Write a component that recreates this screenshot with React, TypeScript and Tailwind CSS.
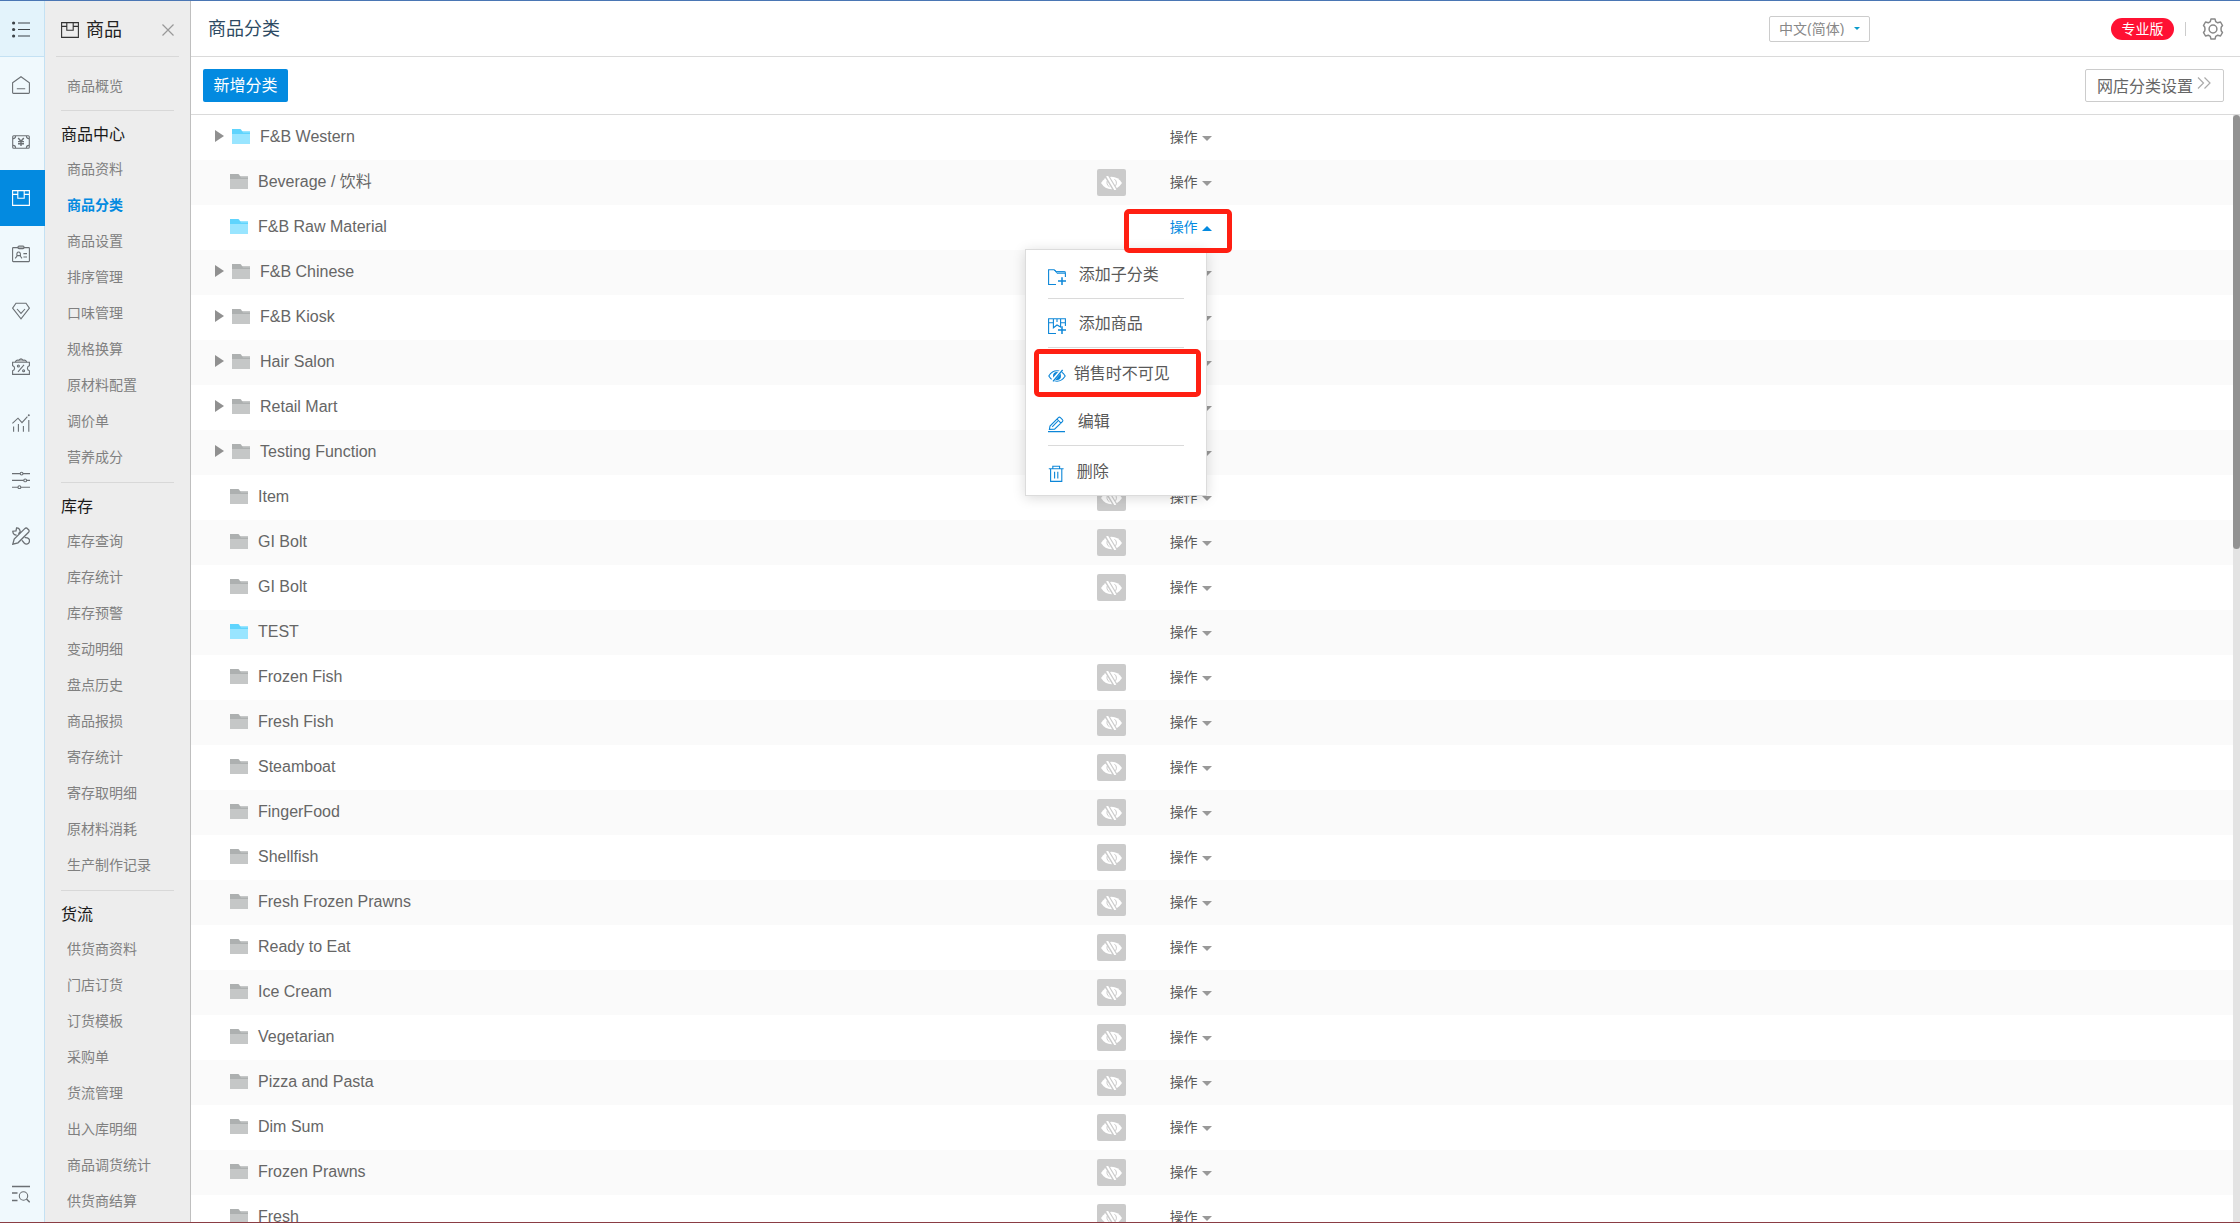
import React from 'react';

const railIcons: { name: string; art: React.ReactNode }[] = [
  {
    name: '菜单',
    art: (
      <>
        <path d="M6 3h12M6 9.5h12M6 16h12" stroke="#3d4348" strokeWidth="1.2" />
        <g fill="#3d4348" stroke="none">
          <circle cx="1.6" cy="3" r="1.6" />
          <circle cx="1.6" cy="9.5" r="1.6" />
          <circle cx="1.6" cy="16" r="1.6" />
        </g>
      </>
    ),
  },
  { name: '首页', art: <path d="M.6 6.8 9 .7l8.4 6.1v9.8q0 .8-.8.8H1.4q-.8 0-.8-.8zM4.8 12.8h8.4" /> },
  {
    name: '收银',
    art: (
      <>
        <rect x=".7" y="2.7" width="16.6" height="12.6" rx="1" />
        <path d="M1 5.6q2.6 0 2.6-2.6M17 5.6q-2.6 0-2.6-2.6M1 12.4q2.6 0 2.6 2.6M17 12.4q-2.6 0-2.6 2.6" />
        <path d="M6.2 5 9 8.3 11.8 5M9 8.3V13M6 8.6h6M6 10.8h6" strokeWidth="1.4" />
      </>
    ),
  },
  {
    name: '商品',
    art: (
      <path d="M.6 1.6h16.8v14.8H.6zM.6 5.4h5.2M12.2 5.4h5.2M5.8 1.6v7.6h6.4V1.6" />
    ),
  },
  {
    name: '员工',
    art: (
      <>
        <rect x=".6" y="2.6" width="16.8" height="14" rx=".6" />
        <rect x="6" y="1" width="6" height="2.6" rx="1" fill="#b5babd" />
        <path d="M3.2 13.4 5 11.2M5 11.2q-.6-4.2 1.6-4.2t1.8 4.2l1.6 2.2M4.8 10.6h3.6M11.4 8.6h3.6M11.4 12h3.6" />
      </>
    ),
  },
  { name: '会员', art: <path d="M4 1.2h10l3.4 5L9 16.8.6 6.2zM5 7l4 4.4L13 7" /> },
  {
    name: '营销',
    art: (
      <>
        <path d="M.6 4.2h16.8v3.4q-2 .6-2 2.6t2 2.6v3.6H.6v-3.6q2-.6 2-2.6t-2-2.6z" />
        <path d="M3.2 4Q4.400 1.400 7 2.200 9-.4 11 2.200 13.600 1.400 14.800 4" fill="#b5babd" />
        <path d="m12 6.800-6 7" />
        <circle cx="6.400" cy="8" r="1" />
        <circle cx="11.600" cy="12.800" r="1" />
      </>
    ),
  },
  {
    name: '报表',
    art: (
      <>
        <path d="M.4 9.400 6 4.200l4 4.400 5.400-6M1.600 12.600v5.200M6.400 10v7.800M11.400 12v5.800M16.800 6v11.800" />
        <circle cx="16.800" cy="1.200" r="1" fill="#6b7074" stroke="none" />
      </>
    ),
  },
  {
    name: '设置',
    art: (
      <>
        <path d="M0 2.600h18M0 9.400h18M0 16.200h18" />
        <g fill="#f0f9fd">
          <circle cx="9.600" cy="2.600" r="1.400" />
          <circle cx="13.200" cy="9.400" r="1.400" />
          <circle cx="7.400" cy="16.200" r="1.400" />
        </g>
      </>
    ),
  },
  {
    name: '工具',
    art: (
      <path
        strokeWidth="1.300"
        d="M.8 17.200 2.200 12 12.800 1.600q1-1 2.200-.4l1.800 1.800q.8 1.200-.2 2.200L6 15.800zM6.400 6.800 8.200 5Q8 .8 4.600.8L4 3.800.8 4.200q.2 3.800 3.800 4M10 13.400l2.200 2.600q2 2 4.400.2 1.800-2.400.2-4.400-1.400-1.400-4-1.200"
      />
    ),
  },
];

function RailSvg({ children, className = '' }: { children: React.ReactNode; className?: string }) {
  return (
    <svg viewBox="0 0 18 18" className={`size-[18px] fill-none ${className}`} strokeWidth="1.1" aria-hidden="true">
      {children}
    </svg>
  );
}

const sections = [
  {
    title: '商品中心',
    items: ['商品资料', '商品分类', '商品设置', '排序管理', '口味管理', '规格换算', '原材料配置', '调价单', '营养成分'],
  },
  {
    title: '库存',
    items: ['库存查询', '库存统计', '库存预警', '变动明细', '盘点历史', '商品报损', '寄存统计', '寄存取明细', '原材料消耗', '生产制作记录'],
  },
  {
    title: '货流',
    items: ['供货商资料', '门店订货', '订货模板', '采购单', '货流管理', '出入库明细', '商品调货统计', '供货商结算'],
  },
];

type Row = { name: string; blue?: boolean; tree?: boolean; open?: boolean };

const rows: Row[] = [
  { name: 'F&B Western', blue: true, tree: true },
  { name: 'Beverage / 饮料' },
  { name: 'F&B Raw Material', blue: true, open: true },
  { name: 'F&B Chinese', tree: true },
  { name: 'F&B Kiosk', tree: true },
  { name: 'Hair Salon', tree: true },
  { name: 'Retail Mart', tree: true },
  { name: 'Testing Function', tree: true },
  { name: 'Item' },
  { name: 'GI Bolt' },
  { name: 'GI Bolt' },
  { name: 'TEST', blue: true },
  { name: 'Frozen Fish' },
  { name: 'Fresh Fish' },
  { name: 'Steamboat' },
  { name: 'FingerFood' },
  { name: 'Shellfish' },
  { name: 'Fresh Frozen Prawns' },
  { name: 'Ready to Eat' },
  { name: 'Ice Cream' },
  { name: 'Vegetarian' },
  { name: 'Pizza and Pasta' },
  { name: 'Dim Sum' },
  { name: 'Frozen Prawns' },
  { name: 'Fresh' },
];

function Folder({ blue }: { blue?: boolean }) {
  return (
    <svg viewBox="0 0 18 15" className="h-[15px] w-[18px] shrink-0" aria-hidden="true">
      <path d="M0 0h8q1 0 1.400 1l.6 1H18v13H0z" fill={blue ? '#5fd4fd' : '#adb0b0'} />
      <path d="M0 5h18v10H0z" fill={blue ? '#99e5ff' : '#c5c7c7'} />
      <path d="M10 2h8v1.500h-7z" fill={blue ? '#99e5ff' : '#c5c7c7'} />
    </svg>
  );
}

function HiddenEye() {
  return (
    <button
      type="button"
      aria-label="销售时不可见"
      className="flex h-[27px] w-[29px] items-center justify-center rounded-[2px] bg-[#cbcbcb]"
    >
      <svg viewBox="0 0 21 14" className="h-[14px] w-[21px]" aria-hidden="true">
        <path d="M0 7Q4 .8 10.500.8T21 7q-4 6.200-10.500 6.200T0 7z" fill="#fff" />
        <path d="M7.500 3.200a4.600 4.600 0 0 0 1 7.600M13.500 3.200a4.600 4.600 0 0 1-.4 7.800" fill="none" stroke="#cbcbcb" strokeWidth="1" />
        <path d="M5.400-.6 14.200 14" stroke="#cbcbcb" strokeWidth="4.600" />
        <path d="M6 0l8.400 14" stroke="#fff" strokeWidth="2" />
      </svg>
    </button>
  );
}

const menuItems: { label: string; gap: string; rule?: boolean; marked?: boolean; art: React.ReactNode }[] = [
  {
    label: '添加子分类',
    gap: 'gap-[13px]',
    rule: true,
    art: (
      <>
        <path d="M8 15.500H.6V.8h5.600l2 1.800h7.200q2 .2 2 2V8" />
        <path d="M6.600 1 9 4.400h8.200V2.600H8z" fill="#8cc8f0" strokeWidth=".7" />
        <path d="M10 12h8M14 8.200v7.800" strokeWidth="1.500" />
      </>
    ),
  },
  {
    label: '添加商品',
    gap: 'gap-[13px]',
    rule: true,
    art: (
      <>
        <path d="M8 15.500H.6V.8h16.800V8M.6 4.800h4.800M12.600 4.800h4.800M5.400.8v9L9 7l3.600 2V.8M9 .8V4" />
        <path d="M10 12h8M14 8.200v7.800" strokeWidth="1.500" />
      </>
    ),
  },
  {
    label: '销售时不可见',
    gap: 'gap-2',
    marked: true,
    art: (
      <>
        <path d="M.8 9Q4 3.800 9 3.800T17.200 9Q14 14.200 9 14.200T.8 9z" />
        <circle cx="9" cy="9" r="3.400" fill="#0c86d8" />
        <path d="M13.800 3 3.800 14.400" stroke="#fff" strokeWidth="3" />
        <path d="M14.600 3 5 14.400" strokeWidth="1.300" />
      </>
    ),
  },
  {
    label: '编辑',
    gap: 'gap-3',
    rule: true,
    art: (
      <path d="M0 15.600h17M1.400 13.400 2 10 10.400 1.600q1-1 2 0l2 2q1 1 0 2L6.600 13.200zM9 3.200l4 4M4.200 10.800l5.600-5.600" />
    ),
  },
  {
    label: '删除',
    gap: 'gap-[11px]',
    art: (
      <path d="M.8 3.800h14.800M4.800 3.600V1.200h6.800v2.400M2.600 4v12.400h11.200V4M6.600 6.800v6.800M9.800 6.800v6.800" />
    ),
  },
];

function ActionMenu() {
  return (
    <div role="menu" className="absolute -left-[145px] top-[44px] z-10 w-[182px] border border-[#dcdcdc] bg-white shadow-[0_2px_12px_rgba(0,0,0,0.15)]">
      {menuItems.map((m) => (
        <div key={m.label} className="relative flex h-[49px] flex-col px-[22px]">
          <button type="button" role="menuitem" className={`flex flex-1 items-center whitespace-nowrap pt-0.5 text-base text-[#595959] ${m.gap}`}>
            <svg viewBox="0 0 18 17" className="mt-1 h-[17px] w-[18px] shrink-0 fill-none stroke-[#0c86d8]" strokeWidth="1.100" aria-hidden="true">
              {m.art}
            </svg>
            {m.label}
          </button>
          {m.rule && <div className="h-px bg-[#dadada]" />}
          {m.marked && (
            <div className="pointer-events-none absolute left-2 right-[5px] top-px h-12 rounded-[5px] border-[5px] border-[#ff1f12]" />
          )}
        </div>
      ))}
    </div>
  );
}

export default function App() {
  return (
    <div className="flex h-screen flex-col overflow-hidden border-b border-b-[#8a3d44] border-t border-t-[#4a76b4] bg-white font-['Liberation_Sans','Noto_Sans_CJK_SC',sans-serif] text-[#666]">
      <div className="flex min-h-0 flex-1">
        <nav aria-label="主导航" className="flex w-[45px] shrink-0 flex-col justify-between border-r border-[#c4e1f3] bg-[#f0f9fd]">
          <div className="grid h-[563px] auto-rows-fr">
            {railIcons.map((icon, i) => (
              <button
                key={icon.name}
                type="button"
                aria-label={icon.name}
                className={
                  i === 0
                    ? 'flex items-center justify-center border-b border-[#c4e1f3] bg-[#e3f3fb]'
                    : i === 3
                      ? '-mr-px flex items-center justify-center bg-[#038ae0] pr-[3px]'
                      : 'flex items-center justify-center'
                }
              >
                <RailSvg className={i === 3 ? 'stroke-white' : '-ml-0.5 stroke-[#6b7074]'}>{icon.art}</RailSvg>
              </button>
            ))}
          </div>
          <button type="button" aria-label="搜索菜单" className="flex h-14 items-center justify-center">
            <RailSvg className="-ml-0.5 stroke-[#6b7074]">
              <path d="M0 1.500h18M0 8h5.500M0 15.500h5.500" strokeWidth="1.300" />
              <circle cx="11.500" cy="11" r="4.200" />
              <path d="m14.500 14 3.200 3.200" strokeWidth="1.500" />
            </RailSvg>
          </button>
        </nav>

        <aside className="flex w-[146px] shrink-0 flex-col overflow-hidden border-r border-[#bfbfbf] bg-[#ededed]">
          <div className="mx-[11px] flex h-14 shrink-0 items-center border-b border-[#d8d8d8] px-[5px] pt-0.5">
            <RailSvg className="stroke-[#333]">{railIcons[3].art}</RailSvg>
            <h2 className="ml-[7px] text-lg text-[#222]">商品</h2>
            <button type="button" aria-label="关闭" className="ml-auto">
              <svg viewBox="0 0 12 12" className="size-3 stroke-[#999]" strokeWidth="1.200" aria-hidden="true">
                <path d="M.5.5l11 11M11.500.5l-11 11" />
              </svg>
            </button>
          </div>
          <a href="#overview" className="flex h-[53px] shrink-0 items-center pl-[22px] pt-1 text-sm text-[#808080]">
            商品概览
          </a>
          {sections.map((s) => (
            <section key={s.title} className="shrink-0 pb-[7px]">
              <div className="mx-4 h-px bg-[#d8d8d8]" />
              <h3 className="flex h-10 items-center pl-4 pt-2 text-base text-[#1a1a1a]">{s.title}</h3>
              {s.items.map((t) => (
                <a
                  key={t}
                  href={`#${t}`}
                  className={
                    t === '商品分类'
                      ? 'flex h-9 items-center whitespace-nowrap pl-[22px] text-sm font-bold text-[#038ae0]'
                      : 'flex h-9 items-center whitespace-nowrap pl-[22px] text-sm text-[#808080]'
                  }
                >
                  {t}
                </a>
              ))}
            </section>
          ))}
        </aside>

        <main className="flex min-w-0 flex-1 flex-col">
          <header className="flex h-14 shrink-0 items-center border-b border-[#dadada] pl-[17px] pr-4">
            <h1 className="text-lg text-[#2d4a63]">商品分类</h1>
            <div className="relative ml-auto mr-[241px]">
              <select
                aria-label="语言"
                className="h-[26px] w-[101px] appearance-none rounded-[2px] border border-[#ccc] bg-white pl-[9px] text-sm leading-none text-[#888]"
              >
                <option>中文(简体)</option>
              </select>
              <span className="pointer-events-none absolute right-[10px] top-[11px] border-x-[3px] border-t-[3px] border-x-transparent border-t-[#0a9bcb]" />
            </div>
            <span className="flex h-[22px] w-[63px] items-center justify-center rounded-full bg-[#ff1133] text-sm text-white">专业版</span>
            <span className="mx-[11px] h-[14px] w-px bg-[#ccc]" />
            <button type="button" aria-label="系统设置" className="ml-[5px]">
              <svg viewBox="0 0 22 22" className="size-[22px] fill-none stroke-[#888]" strokeWidth="1.500" aria-hidden="true">
                <path d="M9 .9h4l.7 2.700 2 1.200 2.800-.8 2 3.500-1.200 1.500q-.6 2 0 4l1.200 1.500-2 3.500-2.800-.8-2 1.200-.7 2.700H9l-.7-2.700-2-1.200-2.800.8-2-3.500L2.700 13q.6-2 0-4L1.500 7.500l2-3.500 2.800.8 2-1.200z" strokeLinejoin="round" />
                <circle cx="11" cy="11" r="3.900" />
              </svg>
            </button>
          </header>

          <div className="flex h-[58px] shrink-0 items-center justify-between border-b border-[#dadada] pl-3 pr-4">
            <button type="button" className="h-[33px] w-[85px] rounded-[2px] bg-[#038ae0] text-base text-white">
              新增分类
            </button>
            <button type="button" className="flex h-[33px] items-center gap-1 rounded-[2px] border border-[#ccc] bg-white pl-[11px] pr-3 pt-0.5 text-base text-[#666]">
              网店分类设置
              <svg viewBox="0 0 14 12" className="-mt-2 h-3 w-[14px] fill-none stroke-[#aaa]" strokeWidth="1.200" aria-hidden="true">
                <path d="M1 .5 6.500 6 1 11.500M7.500.5 13 6l-5.500 5.500" />
              </svg>
            </button>
          </div>

          <div className="flex min-h-0 flex-1 overflow-hidden">
            <ul className="flex-1">
              {rows.map((r, i) => (
                <li key={i} className="grid h-[45px] grid-cols-[44.35%_73px_1fr] items-center even:bg-[#fafafa]">
                  <div className="flex items-center whitespace-nowrap pl-6">
                    {r.tree && (
                      <button type="button" aria-label="展开" className="-mt-1 mr-2">
                        <span className="block border-y-[6px] border-l-[9px] border-y-transparent border-l-[#909090]" />
                      </button>
                    )}
                    <span className={r.tree ? 'flex items-center gap-[10px] pb-0.5' : 'flex items-center gap-[10px] pb-0.5 pl-[15px]'}>
                      <Folder blue={r.blue} />
                      <span className="text-base text-[#666]">{r.name}</span>
                    </span>
                  </div>
                  <div>{!r.tree && !r.blue && <HiddenEye />}</div>
                  <div className="relative flex h-full items-center">
                    <button
                      type="button"
                      aria-expanded={!!r.open}
                      className={
                        r.open
                          ? 'flex items-center gap-1 pb-0.5 text-sm text-[#038ae0]'
                          : 'flex items-center gap-1 pb-0.5 text-sm text-[#595959]'
                      }
                    >
                      操作
                      {r.open ? (
                        <span className="mt-1 border-x-[5px] border-b-[5px] border-x-transparent border-b-[#038ae0]" />
                      ) : (
                        <span className="mt-1 border-x-[5px] border-t-[5px] border-x-transparent border-t-[#999]" />
                      )}
                    </button>
                    {r.open && <ActionMenu />}
                    {r.open && (
                      <div className="pointer-events-none absolute -left-[46px] top-1 z-20 h-11 w-[108px] rounded-[5px] border-[5px] border-[#ff1f12]" />
                    )}
                  </div>
                </li>
              ))}
            </ul>
            <div className="w-[7px] shrink-0 bg-[#e3e3e3]">
              <div className="h-[39.2%] rounded-full bg-[#929292]" />
            </div>
          </div>
        </main>
      </div>
    </div>
  );
}
